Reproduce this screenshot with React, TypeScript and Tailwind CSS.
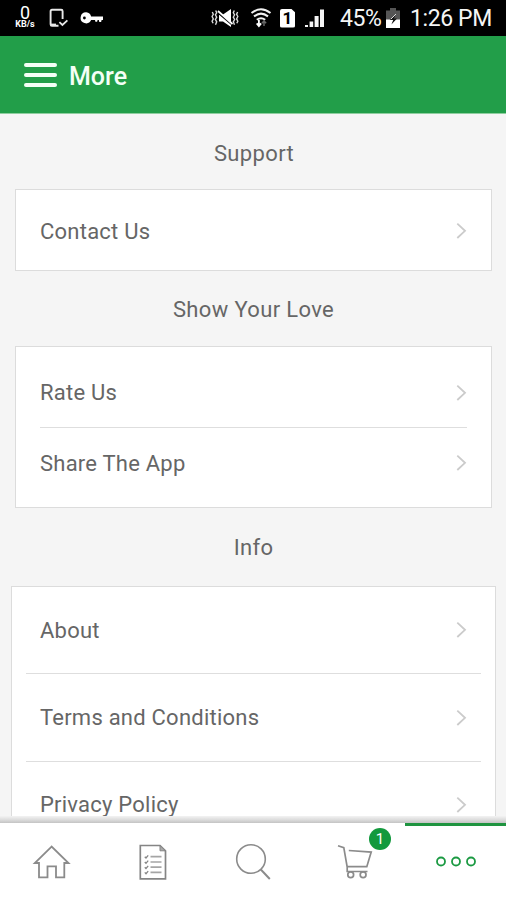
import type { ReactNode } from "react"

function NetSpeed() {
  return (
    <div className="flex w-[22px] flex-col items-center text-white">
      <span className="text-[18px] leading-[13px]">0</span>
      <span className="mt-px text-[9px] leading-[9px] font-bold">KB/s</span>
    </div>
  )
}

function PhoneCheckIcon() {
  return (
    <svg className="ml-[12px] h-[20px] w-[20px]" viewBox="0 0 20 20" fill="none" stroke="#e8e8e8">
      <path d="M14.6 11V3.2q0-1.4-1.4-1.4H4Q2.6 1.8 2.6 3.2v13q0 1.6 1.4 1.6h6.5" strokeWidth="1.9" />
      <path d="M3 16.6h5" strokeWidth="2" />
      <path d="M11.4 14.2l3 2.8 5-4.6" strokeWidth="1.8" />
    </svg>
  )
}

function KeyIcon() {
  return (
    <svg className="ml-[12px] h-[14px] w-[24px]" viewBox="0 0 24 14" fill="#fff">
      <path
        fillRule="evenodd"
        d="M6.3 1.3a5.5 5.5 0 1 0 4.8 7.8H15l.4 1.6h1.7l.5-1.6h1.2l.5 1.8h1.8l.5-1.8H23V5.5H11.1a5.5 5.5 0 0 0-4.8-4.2zM4.4 5.6a1.4 1.4 0 1 1 0 2.8 1.4 1.4 0 0 1 0-2.8z"
      />
    </svg>
  )
}

function MuteVibrateIcon() {
  return (
    <svg className="h-[20px] w-[30px]" viewBox="0 0 30 20">
      <path d="M9 6.5h4L21 1v18l-8-5.5H9z" fill="#fff" />
      <path d="M8 4.6l15 12.6" stroke="#000" strokeWidth="2" />
      <path d="M8 3l14.5 13" stroke="#fff" strokeWidth="1.7" />
      <path
        d="M5.7 2.5l1 2.3-1.3 2 1.3 2.4-1.3 2.3 1.3 2.4-1.2 2.8M2.3 4l1 2.2-1.2 2.3 1.2 2.4-1.2 2.3 1 2M24.3 2.5l-1 2.3 1.3 2-1.3 2.4 1.3 2.3-1.3 2.4 1.2 2.8M27.6 4l-1 2.2 1.2 2.3-1.2 2.4 1.2 2.3-1 2"
        fill="none"
        stroke="#ddd"
        strokeWidth="1.4"
      />
    </svg>
  )
}

function WifiIcon() {
  return (
    <svg className="ml-[10px] h-[20px] w-[22px]" viewBox="0 0 22 20" fill="none">
      <path
        d="M1.5 5q9.5-7.5 19 0M4 8.4q7-5.5 14 0M6.8 11.8q4.2-3.2 8.4 0"
        stroke="#f2f2f2"
        strokeWidth="2"
      />
      <path d="M8.9 12v5.6M6.7 15.4l2.2 2.6 2.2-2.6" stroke="#fff" strokeWidth="1.8" />
      <path d="M14 18v-4.8M11.9 15.3l2.1-2.4 2.1 2.4" stroke="#666" strokeWidth="1.5" />
    </svg>
  )
}

function SimIcon() {
  return (
    <div className="ml-[8px] h-[19px] w-[15px] rounded-[2px] bg-white text-center text-[17px] leading-[19px] font-bold text-black [clip-path:polygon(0_0,73%_0,100%_20%,100%_100%,0_100%)]">
      1
    </div>
  )
}

function SignalIcon() {
  return (
    <svg className="ml-[9px] h-[20px] w-[21px]" viewBox="0 0 21 20" fill="#f5f5f5">
      <path d="M1 17h3v2H1zM5.6 13.5h3.6V19H5.6zM10.6 8h4v11h-4zM16 1.5h4V19h-4z" />
    </svg>
  )
}

function BatteryIcon() {
  return (
    <svg className="h-[21px] w-[16px]" viewBox="0 0 16 21">
      <path d="M5 0h6v2.5h4V20H1V2.5h4z" fill="#555" />
      <path d="M1 11.5h14V20H1z" fill="#fff" />
      <path d="M10.5 6.5L4.8 12h3.4L6.4 16.5l5.6-6H9z" fill="#111" />
      <path d="M11 6L6 11" stroke="#ddd" strokeWidth="1" />
    </svg>
  )
}

function StatusBar() {
  return (
    <div className="flex h-9 shrink-0 items-center bg-black pr-[14px] pl-[14px] text-[#f5f5f5]">
      <div className="mt-[-1px] flex items-center">
        <NetSpeed />
        <PhoneCheckIcon />
        <KeyIcon />
      </div>
      <div className="ml-auto flex items-center">
        <MuteVibrateIcon />
        <WifiIcon />
        <SimIcon />
        <SignalIcon />
        <span className="ml-[15px] w-[45px] pt-[2px] text-[23px] leading-[34px] tracking-[-0.4px] whitespace-nowrap">45%</span>
        <BatteryIcon />
        <span className="ml-[9px] w-[82px] pt-[2px] text-[23px] leading-[34px] tracking-[-0.4px] whitespace-nowrap">1:26 PM</span>
      </div>
    </div>
  )
}

function Header() {
  return (
    <header className="flex h-[78px] shrink-0 items-center border-b border-[#8fce9f] bg-[#229e49] pl-6">
      <button className="flex w-[33px] flex-col gap-[6px]" aria-label="Menu">
        <span className="h-[4px] rounded-full bg-[#f4fff6]" />
        <span className="h-[4px] rounded-full bg-[#f4fff6]" />
        <span className="h-[4px] rounded-full bg-[#f4fff6]" />
      </button>
      <h1 className="ml-[12px] pt-[3px] text-[25px] leading-none font-medium text-[#f4fff6]">More</h1>
    </header>
  )
}

function SectionTitle({ children, className }: { children: string; className: string }) {
  return (
    <h2 className={`flex shrink-0 items-center justify-center text-[22px] tracking-[0.35px] ${className}`}>
      {children}
    </h2>
  )
}

function Row({ label, className = "" }: { label: string; className?: string }) {
  return (
    <a href="#" className={`flex items-center justify-between ${className}`}>
      <span className="text-[22px] tracking-[0.23px]">{label}</span>
      <svg className="h-[18px] w-[12px]" viewBox="0 0 12 18" fill="none" stroke="#cbcbcb" strokeWidth="1.8">
        <path d="M2.3 1.6L10 8.8l-7.7 7.2" />
      </svg>
    </a>
  )
}

function Tab({ children }: { children: ReactNode }) {
  return <a href="#" className="relative flex justify-center pt-[18px]">{children}</a>
}

function TabBar() {
  return (
    <nav className="grid h-[77px] shrink-0 grid-cols-[101px_101px_101px_101px_102px] bg-white">
      <Tab>
        <svg className="h-10 w-[41px]" viewBox="0 0 41 40" fill="none" stroke="#8b8b8b" strokeWidth="1.8">
          <path d="M21.6 5.6L4.8 22H9v14.3h8.5V25.3H26v11h8.3V22h4.2z" />
        </svg>
      </Tab>
      <Tab>
        <svg className="h-10 w-[41px]" viewBox="0 0 41 40" fill="none" stroke="#858585" strokeWidth="1.7">
          <path d="M9.3 4.5H29l5.5 5.3v28H9.3z" />
          <path d="M29 4.5v5.3h5.5z" fill="#aaa" strokeWidth="1" />
          <path d="M19.5 15.7h11M19.5 21h11M19.5 26.2h11M19.5 31.4h11" stroke="#a5a5a5" />
          <path
            d="M13.8 15.7l1.2 1.3 2.2-2.6M13.8 21l1.2 1.3 2.2-2.6M13.8 26.2l1.2 1.3 2.2-2.6M13.8 31.4l1.2 1.3 2.2-2.6"
            strokeWidth="1.3"
          />
        </svg>
      </Tab>
      <Tab>
        <svg className="h-10 w-[41px]" viewBox="0 0 41 40" fill="none" stroke="#8b8b8b" strokeWidth="1.6">
          <circle cx="19" cy="18" r="14.3" />
          <path d="M28.8 28.5l9 9.5" strokeWidth="2" />
        </svg>
      </Tab>
      <Tab>
        <svg className="h-10 w-[41px]" viewBox="0 0 41 40" fill="none" stroke="#8b8b8b" strokeWidth="1.7">
          <path d="M5 4.8l5.8 1.9L14.2 26v4.5h20.3" />
          <path d="M15.8 9.5l22.4 1.6-4.4 14.6H14" />
          <circle cx="17.7" cy="33.7" r="2.9" />
          <circle cx="30.1" cy="33.7" r="2.9" />
        </svg>
        <span className="absolute top-[5px] left-[66px] grid h-[22px] w-[22px] place-items-center rounded-full bg-[#12993d] pt-px text-[15px] leading-none text-white">
          1
        </span>
      </Tab>
      <Tab>
        <span className="absolute top-0 right-0 h-[3px] w-[101px] bg-[#1f9440]" />
        <svg className="h-10 w-[42px]" viewBox="0 0 42 40" fill="none" stroke="#1b9a42" strokeWidth="1.8">
          <circle cx="7" cy="20.5" r="4" />
          <circle cx="22" cy="20.5" r="4" />
          <circle cx="37" cy="20.5" r="4" />
        </svg>
      </Tab>
    </nav>
  )
}

export default function App() {
  return (
    <div className="flex h-[900px] w-[506px] flex-col overflow-hidden bg-[#f5f5f5] font-['Roboto',sans-serif] text-[#666]">
      <StatusBar />
      <Header />
      <main className="flex h-[702px] shrink-0 flex-col overflow-hidden">
        <SectionTitle className="h-[75px] pt-[3px] pl-[2px]">Support</SectionTitle>
        <section className="mr-[14px] ml-[15px] h-[82px] shrink-0 border border-[#dcdcdc] bg-white px-6">
          <Row label="Contact Us" className="h-20 pt-[2px]" />
        </section>
        <SectionTitle className="h-[75px] pt-[2px] pl-px">Show Your Love</SectionTitle>
        <section className="mr-[14px] ml-[15px] h-[162px] shrink-0 border border-[#dcdcdc] bg-white px-6">
          <Row label="Rate Us" className="h-[81px] border-b border-[#dedede] pt-[11px]" />
          <Row label="Share The App" className="h-[70px]" />
        </section>
        <SectionTitle className="h-[78px] pl-px">Info</SectionTitle>
        <section className="mr-[10px] ml-[11px] shrink-0 border border-[#dcdcdc] bg-white px-[14px]">
          <Row label="About" className="h-[87px] border-b border-[#dedede] pr-[14px] pl-[14px]" />
          <Row label="Terms and Conditions" className="h-[88px] border-b border-[#dedede] pr-[14px] pl-[14px]" />
          <Row label="Privacy Policy" className="h-[85px] pr-[14px] pl-[14px]" />
        </section>
      </main>
      <div className="h-[7px] shrink-0 bg-gradient-to-b from-[#f3f3f3] via-[#dedede] to-[#c4c4c4]" />
      <TabBar />
    </div>
  )
}
